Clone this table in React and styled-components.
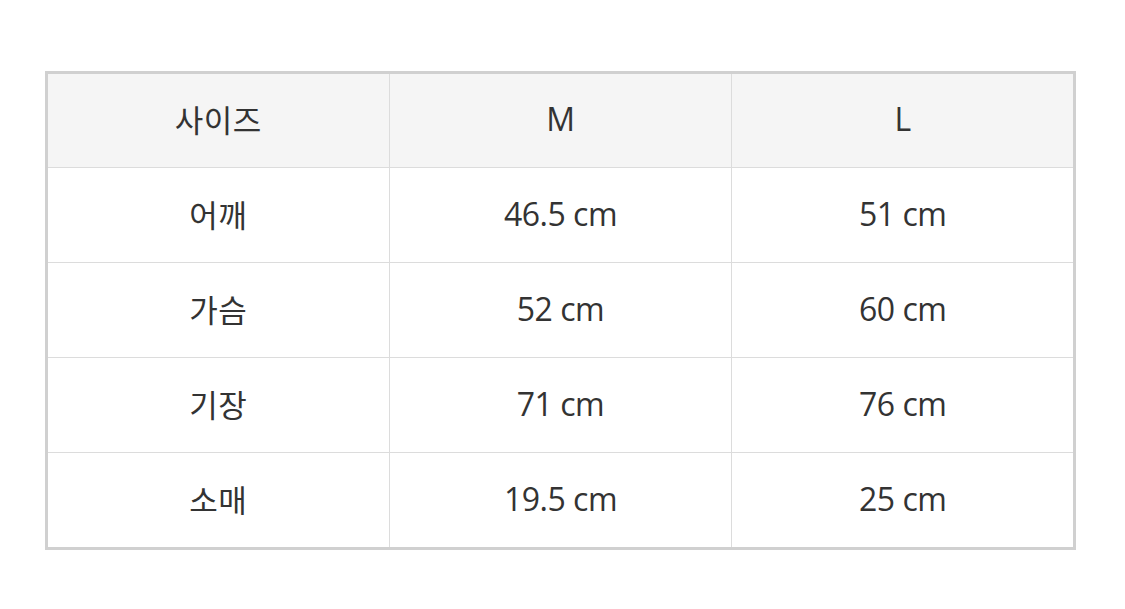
import React from 'react';
import styled, { createGlobalStyle } from 'styled-components';

const GlobalStyle = createGlobalStyle`
    body {
        margin: 0;
        background: #ffffff;
        font-family: "Open Sans", "Noto Sans CJK KR", sans-serif;
    }
`;

const Wrapper = styled.div`
    padding: 71px 0 0 45px;
`;

const Table = styled.table`
    width: 1031px;
    border-collapse: collapse;
    border: 3px solid #d0d0d0;
    table-layout: fixed;
    color: #333333;
`;

const Cell = styled.td`
    height: ${(props) => props.height}px;
    padding: 0 0 4px;
    border: 1px solid #dcdcdc;
    text-align: center;
    vertical-align: middle;
    font-size: ${(props) => (props.korean ? 31 : 32)}px;
    letter-spacing: ${(props) => (props.korean ? '0.5px' : '-0.5px')};
    background: ${(props) => (props.head ? '#f5f5f5' : '#ffffff')};
    font-family: ${(props) =>
        props.korean
            ? '"Noto Sans CJK KR", sans-serif'
            : '"Open Sans", "Noto Sans CJK KR", sans-serif'};
`;

const header = ['사이즈', 'M', 'L'];

const rows = [
    ['어깨', '46.5 cm', '51 cm'],
    ['가슴', '52 cm', '60 cm'],
    ['기장', '71 cm', '76 cm'],
    ['소매', '19.5 cm', '25 cm'],
];

function App() {
    return (
        <Wrapper>
            <GlobalStyle />
            <Table>
                <tbody>
                    <tr>
                        {header.map((text, i) => (
                            <Cell key={i} head height={89} korean={i === 0}>
                                {text}
                            </Cell>
                        ))}
                    </tr>
                    {rows.map((row) => (
                        <tr key={row[0]}>
                            {row.map((text, i) => (
                                <Cell key={i} height={90} korean={i === 0}>
                                    {text}
                                </Cell>
                            ))}
                        </tr>
                    ))}
                </tbody>
            </Table>
        </Wrapper>
    );
}

export default App;
